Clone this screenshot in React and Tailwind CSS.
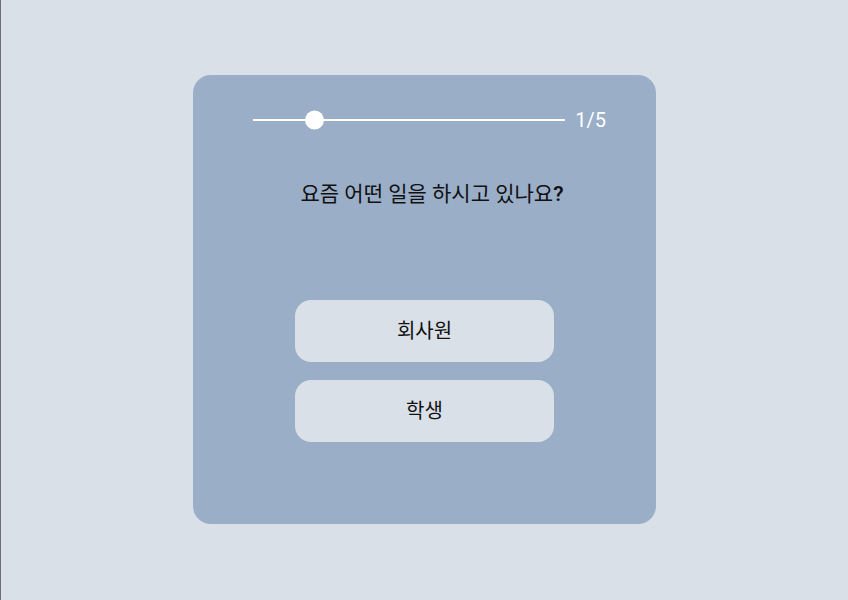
import React from 'react'

export default function App() {
  return (
    <div
      className="min-h-[600px] w-full bg-[#d9e0e7] border-l border-[#6b6f75] pt-[75px]"
      style={{ fontFamily: 'Roboto, "Noto Sans CJK KR", sans-serif' }}
    >
      <div className="mx-auto w-[463px] h-[449px] rounded-[18px] bg-[#9aaec8] flex flex-col">
        {/* progress */}
        <div className="mt-[34px] ml-[60px] mr-[50px] h-[22px] flex items-center gap-[10px]">
          <div className="relative flex-1 h-[2px] bg-white">
            <div className="absolute left-[52px] top-1/2 -translate-y-1/2 w-[19px] h-[19px] rounded-full bg-white" />
          </div>
          <span className="text-white text-[20px] leading-none">1/5</span>
        </div>

        <p className="mt-[50px] text-center pl-[15px] text-[21px] leading-[26px] text-[#111]">
          요즘 어떤 일을 하시고 있나요<span className="font-semibold">?</span>
        </p>

        <div className="mt-[93px] flex flex-col items-center gap-[18px]">
          <button className="w-[259px] h-[62px] rounded-[16px] bg-[#d9e0e7] text-[20px] text-[#111]">
            회사원
          </button>
          <button className="w-[259px] h-[62px] rounded-[16px] bg-[#d9e0e7] text-[20px] text-[#111]">
            학생
          </button>
        </div>
      </div>
    </div>
  )
}
